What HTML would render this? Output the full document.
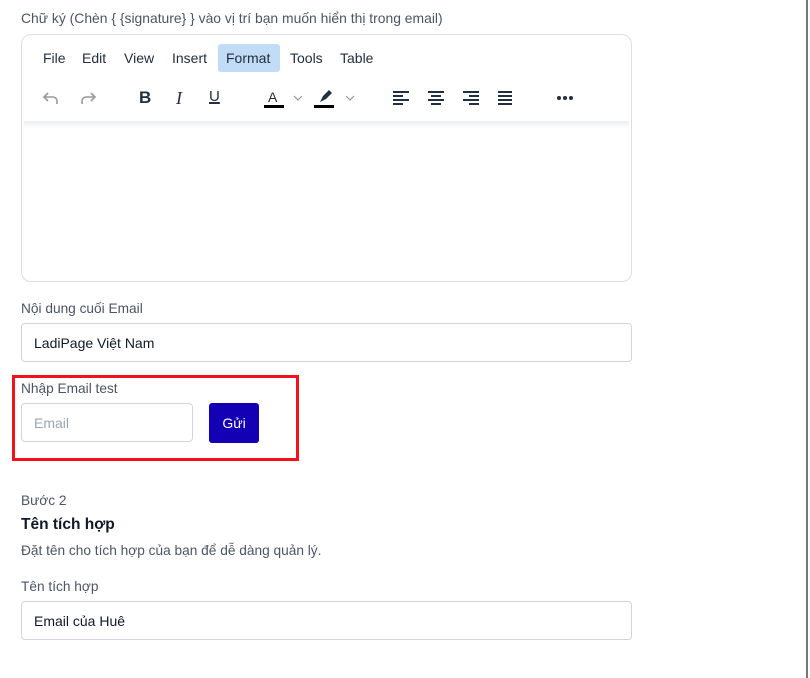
<!DOCTYPE html>
<html><head><meta charset="utf-8"><style>
*{box-sizing:border-box;margin:0;padding:0}
body{width:810px;height:678px;background:#fff;font-family:"Liberation Sans",sans-serif;color:#111827;position:relative;overflow:hidden}
.abs{position:absolute}
.lbl{font-size:13.7px;color:#4b5563}
.inp{position:absolute;border:1px solid #d1d5db;border-radius:4px;font-size:14px;color:#111827;padding-left:12px;display:flex;align-items:center}
.menu span{position:absolute;top:0;font-size:14px;color:#222f3e;line-height:28px}
svg{position:absolute}
</style></head><body>
<div class="abs" style="left:806px;top:0;width:2px;height:678px;background:#777"></div>
<div class="abs lbl" style="left:21px;top:10px;font-size:13.9px">Chữ ký (Chèn { {signature} } vào vị trí bạn muốn hiển thị trong email)</div>
<div class="abs" style="left:21px;top:34px;width:611px;height:248px;border:1px solid #dcdfe3;border-radius:10px"></div>
<div class="abs" style="left:24px;top:121px;width:605px;height:8px;background:linear-gradient(#eceef0,#fff)"></div>
<div class="abs" style="left:218px;top:44px;width:62px;height:28px;background:#c2dbf6;border-radius:3px"></div>
<div class="menu abs" style="left:0;top:44px;width:400px;height:28px">
<span style="left:43px">File</span><span style="left:82px">Edit</span><span style="left:124px">View</span><span style="left:172px">Insert</span><span style="left:226px">Format</span><span style="left:290px">Tools</span><span style="left:340px">Table</span>
</div>
<svg style="left:40px;top:88px" width="22" height="22" viewBox="0 0 22 22" fill="none" stroke="#999" stroke-width="1.6"><path d="M8 5 4 9l4 4M4 9h9a4 4 0 0 1 4 4v3"/></svg>
<svg style="left:77px;top:88px" width="22" height="22" viewBox="0 0 22 22" fill="none" stroke="#999" stroke-width="1.6"><path d="M14 5l4 4-4 4M18 9H9a4 4 0 0 0-4 4v3"/></svg>
<div class="abs" style="left:139px;top:88px;font-weight:bold;font-size:17px;color:#222f3e">B</div>
<div class="abs" style="left:176px;top:88px;font-style:italic;font-family:'Liberation Serif',serif;font-size:18px;color:#222f3e">I</div>
<div class="abs" style="left:209px;top:88px;font-size:15px;color:#222f3e;text-decoration:underline;text-decoration-thickness:2px">U</div>
<div class="abs" style="left:268px;top:89px;font-size:14px;color:#222f3e">A</div>
<div class="abs" style="left:264px;top:105px;width:20px;height:3px;background:#000"></div>
<svg style="left:292px;top:93px" width="12" height="10" viewBox="0 0 12 10" fill="none" stroke="#999" stroke-width="1.2"><path d="M2 3l4 4 4-4"/></svg>
<svg style="left:317px;top:88px" width="18" height="16" viewBox="0 0 18 16"><path d="M3 14l3-6 6-6 3 3-6 6z" fill="#222f3e"/></svg>
<div class="abs" style="left:314px;top:105px;width:20px;height:3px;background:#000"></div>
<svg style="left:344px;top:93px" width="12" height="10" viewBox="0 0 12 10" fill="none" stroke="#999" stroke-width="1.2"><path d="M2 3l4 4 4-4"/></svg>
<svg style="left:392px;top:90px" width="120" height="16" viewBox="0 0 120 16" fill="#222f3e">
<rect x="1" y="1" width="16" height="2"/><rect x="1" y="5" width="10" height="2"/><rect x="1" y="9" width="16" height="2"/><rect x="1" y="13" width="10" height="2"/>
<rect x="36" y="1" width="16" height="2"/><rect x="39" y="5" width="10" height="2"/><rect x="36" y="9" width="16" height="2"/><rect x="39" y="13" width="10" height="2"/>
<rect x="71" y="1" width="16" height="2"/><rect x="77" y="5" width="10" height="2"/><rect x="71" y="9" width="16" height="2"/><rect x="77" y="13" width="10" height="2"/>
<rect x="106" y="1" width="16" height="2"/><rect x="106" y="5" width="16" height="2"/><rect x="106" y="9" width="16" height="2"/><rect x="106" y="13" width="16" height="2"/>
</svg>
<svg style="left:556px;top:95px" width="18" height="6" viewBox="0 0 18 6" fill="#222f3e"><circle cx="3" cy="3" r="2"/><circle cx="9" cy="3" r="2"/><circle cx="15" cy="3" r="2"/></svg>

<div class="abs lbl" style="left:21px;top:301px">Nội dung cuối Email</div>
<div class="inp" style="left:21px;top:323px;width:611px;height:39px">LadiPage Việt Nam</div>

<div class="abs" style="left:12px;top:375px;width:287px;height:86px;border:3px solid #f2121c"></div>
<div class="abs lbl" style="left:21px;top:381px">Nhập Email test</div>
<div class="inp" style="left:21px;top:403px;width:172px;height:39px;color:#9ca3af">Email</div>
<div class="abs" style="left:209px;top:403px;width:50px;height:40px;background:#1400b4;border-radius:3px;color:#fff;font-size:14px;text-align:center;line-height:40px">Gửi</div>

<div class="abs lbl" style="left:21px;top:493px">Bước 2</div>
<div class="abs" style="left:21px;top:516px;font-size:15.5px;font-weight:bold;color:#111827">Tên tích hợp</div>
<div class="abs lbl" style="left:21px;top:543px;font-size:13.7px">Đặt tên cho tích hợp của bạn để dễ dàng quản lý.</div>
<div class="abs lbl" style="left:21px;top:579px">Tên tích hợp</div>
<div class="inp" style="left:21px;top:601px;width:611px;height:39px">Email của Huê</div>
</body></html>
